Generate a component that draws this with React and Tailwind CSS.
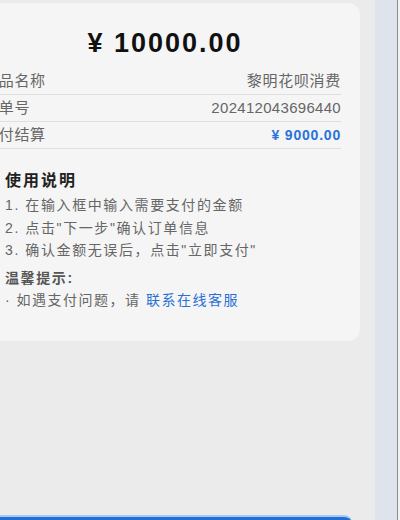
export default function App() {
  const cjk = { fontFamily: '"Liberation Sans", "Noto Sans CJK SC", sans-serif' };
  return (
    <div className="flex h-[520px] w-[400px] overflow-hidden bg-[#ebebeb]" style={cjk}>
      <div className="h-full w-[375px] shrink-0 overflow-hidden bg-[#ebebeb]">
        <div className="ml-[-30px] flex w-[390px] flex-col">
          <div className="mt-[3px] w-[390px] rounded-xl bg-[#f5f5f5] pb-[30px] pl-[13px] pr-[19px] pt-[22px]">
            <div className="pl-[6px] text-center text-[27px] font-bold leading-[36px] tracking-[2px] text-[#111]">
              ¥ 10000.00
            </div>
            <div className="mt-[7px] flex flex-col">
              <div className="flex h-[27px] items-center justify-between border-b border-[#e0e0e0] text-[15px] tracking-[0.7px] text-[#666]">
                <span>商品名称</span>
                <span>黎明花呗消费</span>
              </div>
              <div className="flex h-[27px] items-center justify-between border-b border-[#e0e0e0] text-[15px] tracking-[0.7px] text-[#666]">
                <span>订单号</span>
                <span className="tracking-[0.3px]">202412043696440</span>
              </div>
              <div className="flex h-[27px] items-center justify-between border-b border-[#e0e0e0] text-[15px] tracking-[0.7px] text-[#666]">
                <span>支付结算</span>
                <span className="text-[14px] font-bold tracking-[0.8px] text-[#2a72dc]">¥ 9000.00</span>
              </div>
            </div>
            <div className="mt-[20px] pl-[22px]">
              <div className="text-[16px] font-bold leading-[24px] tracking-[2px] text-[#222]">使用说明</div>
              <div className="mt-[1px] text-[14px] leading-[22.5px] tracking-[1.6px] text-[#666]">
                <div>1. 在输入框中输入需要支付的金额</div>
                <div>2. 点击"下一步"确认订单信息</div>
                <div>3. 确认金额无误后，点击"立即支付"</div>
              </div>
              <div className="mt-[5px] text-[14px] font-semibold leading-[22px] tracking-[1.6px] text-[#555]">温馨提示:</div>
              <div className="text-[14px] leading-[22px] tracking-[1.5px] text-[#666]">
                · 如遇支付问题，请 <span className="text-[#2b6fd6]">联系在线客服</span>
              </div>
            </div>
          </div>
          <div className="mt-[174px] h-[40px] w-[382px] rounded-lg border-t-2 border-[#a9c9f3] bg-[#1f6fd6]"></div>
        </div>
      </div>
      <div className="h-full w-[22px] shrink-0 bg-[#dfe3eb]"></div>
      <div className="h-full w-[1px] shrink-0 bg-[#8a8f96]"></div>
      <div className="h-full flex-1 bg-[#f2f2f2]"></div>
    </div>
  );
}
